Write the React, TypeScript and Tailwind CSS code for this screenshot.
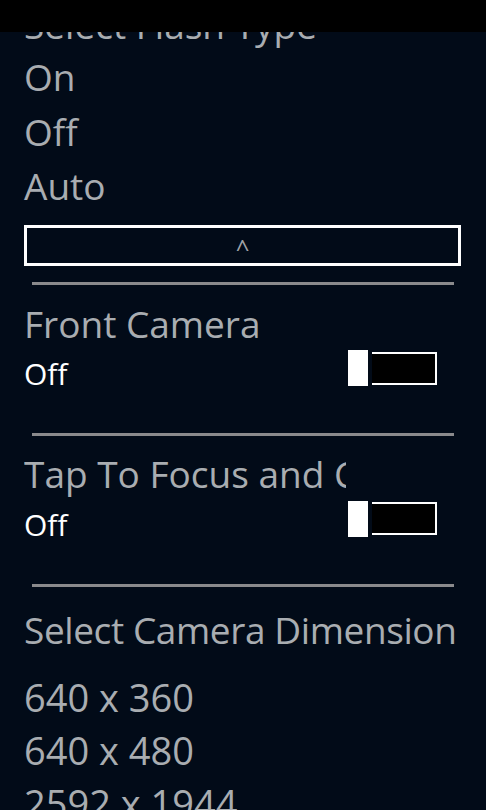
import React from "react";

function Toggle() {
  return (
    <div className="flex items-center">
      <div className="w-[20px] h-[36px] bg-white" />
      <div className="ml-[4px] w-[65px] h-[33px] bg-black border-2 border-l-0 border-white" />
    </div>
  );
}

function Divider({ className }: { className: string }) {
  return <div className={"w-[422px] h-[3px] bg-[#8a8a8c] " + className} />;
}

export default function App() {
  return (
    <div
      className="relative w-[486px] h-[810px] overflow-hidden bg-[#020b18] text-[#a9adb1]"
      style={{ fontFamily: "'Open Sans', 'Noto Sans', sans-serif" }}
    >
      <div className="absolute top-0 left-0 w-full h-[32px] bg-black z-10" />
      <div className="pl-[24px]">
        <div className="text-[37px] leading-[50px] h-[50px] whitespace-nowrap">Select Flash Type</div>
        <div className="text-[37px] leading-[54.5px]">On</div>
        <div className="text-[37px] leading-[54.5px]">Off</div>
        <div className="text-[37px] leading-[54.5px]">Auto</div>
        <div className="mt-[11.5px] w-[437px] h-[41px] border-[3px] border-white flex items-center justify-center">
          <span className="text-[24px] leading-[24px] mt-[4px] text-[#a0a4a8]">^</span>
        </div>
      </div>
      <Divider className="ml-[32px] mt-[16px]" />
      <div className="pl-[24px]">
        <div className="mt-[14px] text-[37px] leading-[50px] h-[50px]">Front Camera</div>
        <div className="mt-[1px] w-[413px] h-[36px] flex items-end justify-between">
          <span className="text-[30px] leading-[24px] text-white">Off</span>
          <Toggle />
        </div>
      </div>
      <Divider className="ml-[32px] mt-[47px]" />
      <div className="pl-[24px]">
        <div className="mt-[12.5px] w-[322px] overflow-hidden whitespace-nowrap text-[37px] leading-[50px] h-[50px]">
          Tap To Focus and Capture
        </div>
        <div className="mt-[1.4px] w-[413px] h-[37px] flex items-end justify-between">
          <span className="text-[30px] leading-[24px] text-white">Off</span>
          <Toggle />
        </div>
      </div>
      <Divider className="ml-[32px] mt-[47px]" />
      <div className="pl-[24px]">
        <div className="mt-[18.6px] text-[37px] tracking-[-0.4px] leading-[50px] h-[50px] whitespace-nowrap">
          Select Camera Dimension
        </div>
        <div className="mt-[15.5px] text-[38px] leading-[53px]">640 x 360</div>
        <div className="text-[38px] leading-[53px]">640 x 480</div>
        <div className="text-[38px] leading-[53px]">2592 x 1944</div>
      </div>
    </div>
  );
}
